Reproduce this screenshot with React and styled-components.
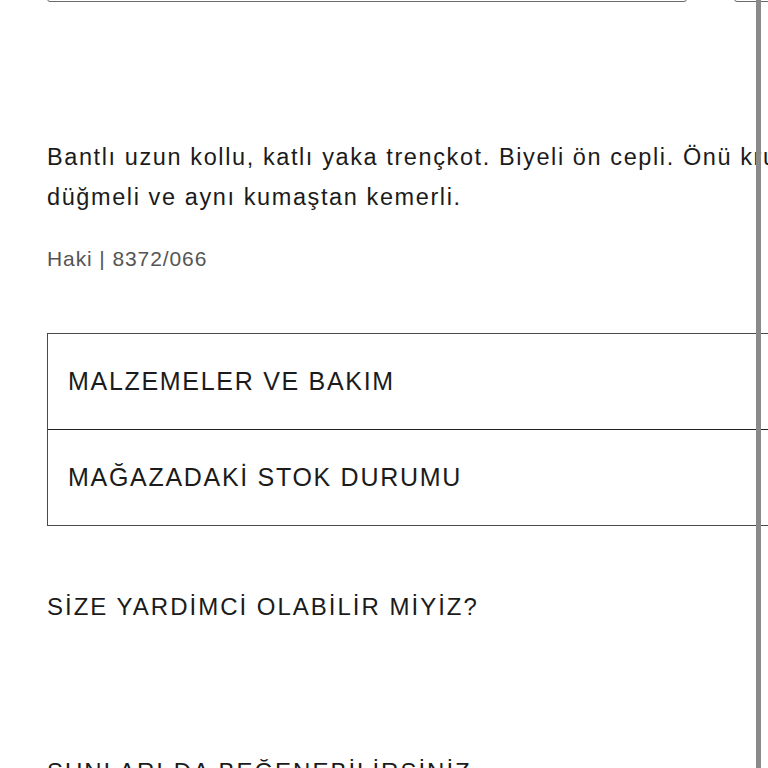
import React from "react";
import styled, { createGlobalStyle } from "styled-components";

const Global = createGlobalStyle`
  html, body { margin: 0; padding: 0; background: #fff; overflow: hidden; }
  body { font-family: "Liberation Sans", Arial, sans-serif; color: #1b1b1b; }
`;

const Page = styled.div`
  position: relative;
  width: 768px;
  height: 768px;
  overflow: hidden;
`;

const Content = styled.div`
  width: 900px;
  padding: 0 0 0 47px;
  box-sizing: border-box;
`;

const ButtonRow = styled.div`
  display: flex;
  gap: 47px;
  margin-top: -46px;
`;

const OutlineButton = styled.div`
  width: ${(p) => p.$w}px;
  height: 48px;
  box-sizing: border-box;
  border: 1px solid #6a6a6a;
  border-radius: 3px;
`;

const Description = styled.p`
  margin: 135px 0 0;
  font-size: 23.5px;
  line-height: 40px;
  letter-spacing: 1.6px;
  white-space: nowrap;
  color: #1b1b1b;
`;

const Reference = styled.p`
  margin: 27px 0 0;
  font-size: 21px;
  line-height: 30px;
  letter-spacing: 0.9px;
  color: #555;
`;

const Accordion = styled.div`
  margin-top: 59px;
  border: 1px solid #4a4a4a;
  border-right: none;
`;

const AccordionRow = styled.div`
  height: 95px;
  display: flex;
  align-items: center;
  padding-left: 20px;
  font-size: 25px;
  letter-spacing: 1.7px;
  color: #1b1b1b;
  & + & { border-top: 1.5px solid #222; }
`;

const SectionTitle = styled.h2`
  margin: ${(p) => p.$mt}px 0 0;
  font-weight: 400;
  font-size: 24px;
  line-height: 30px;
  letter-spacing: 2px;
  color: #1b1b1b;
`;

const ScrollBar = styled.div`
  position: absolute;
  top: 0;
  bottom: 0;
  left: 756px;
  width: 5px;
  background: #8a8a8a;
`;

export default function App() {
  return (
    <Page>
      <Global />
      <Content>
        <ButtonRow>
          <OutlineButton $w={640} />
          <OutlineButton $w={120} />
        </ButtonRow>
        <Description>
          Bantlı uzun kollu, katlı yaka trençkot. Biyeli ön cepli. Önü kruvaze
          <br />
          düğmeli ve aynı kumaştan kemerli.
        </Description>
        <Reference>Haki | 8372/066</Reference>
        <Accordion>
          <AccordionRow>MALZEMELER VE BAKIM</AccordionRow>
          <AccordionRow>MAĞAZADAKİ STOK DURUMU</AccordionRow>
        </Accordion>
        <SectionTitle $mt={66}>SİZE YARDİMCİ OLABİLİR MİYİZ?</SectionTitle>
        <SectionTitle $mt={135}>ŞUNLARI DA BEĞENEBİLİRSİNİZ</SectionTitle>
      </Content>
      <ScrollBar />
    </Page>
  );
}
